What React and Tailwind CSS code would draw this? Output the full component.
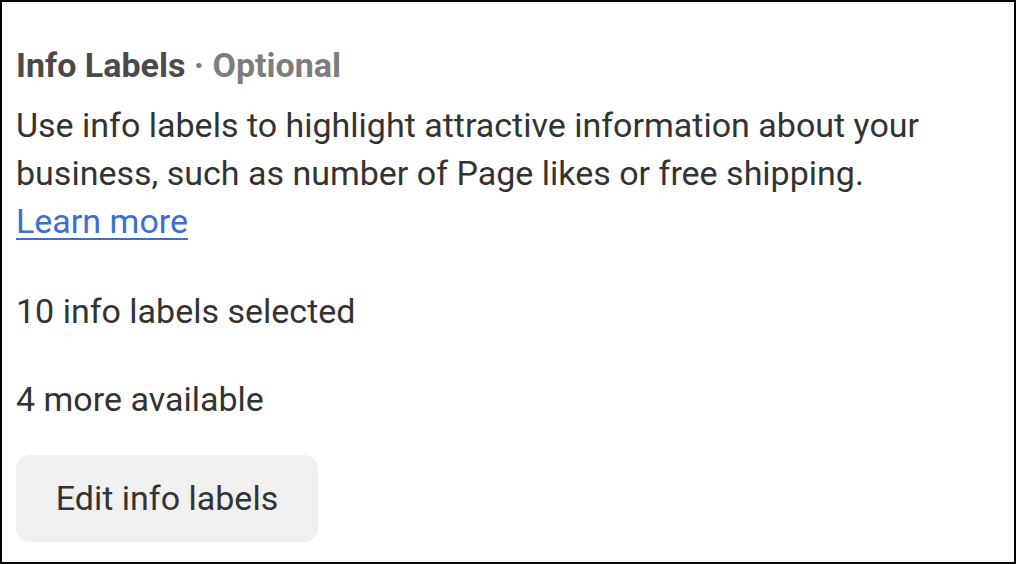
export default function App() {
  return (
    <div className="w-[1016px] h-[564px] bg-white border-2 border-black font-['Roboto',sans-serif] text-[#333333] overflow-hidden">
      <div className="flex flex-col items-start px-[14px] pt-[39px]">
        {/* Header */}
        <h2 className="text-[34px] leading-[48px] font-bold text-[#4a4a4a]">
          Info Labels <span className="text-[#7d7d7d]">· Optional</span>
        </h2>
        <p className="mt-[12px] text-[34px] leading-[48px] whitespace-nowrap">
          Use info labels to highlight attractive information about your
          <br />
          business, such as number of Page likes or free shipping.
          <br />
          <a href="#" className="text-[#3b6fd6] underline underline-offset-[5px] decoration-[2px]">
            Learn more
          </a>
        </p>

        {/* Counts */}
        <p className="mt-[42px] text-[34px] leading-[48px]">10 info labels selected</p>
        <p className="mt-[40px] text-[34px] leading-[48px]">4 more available</p>

        <button className="mt-[32px] w-[302px] h-[87px] rounded-[14px] bg-[#f0f0f0] text-[34px] text-[#333333] flex items-center justify-center">
          Edit info labels
        </button>
      </div>
    </div>
  );
}
